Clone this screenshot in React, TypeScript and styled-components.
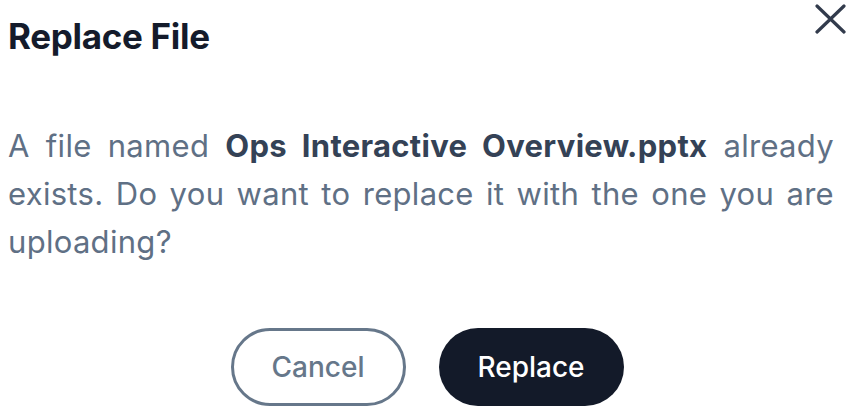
import React from "react";
import styled, { createGlobalStyle } from "styled-components";

const Global = createGlobalStyle`
  html, body { margin: 0; padding: 0; background: #ffffff; }
  body { font-family: Inter, "Noto Sans", sans-serif; -webkit-font-smoothing: antialiased; }
`;

const Dialog = styled.div`
  width: 849px;
  height: 411px;
  box-sizing: border-box;
  padding: 0 3px 0 8px;
  display: flex;
  flex-direction: column;
`;

const Header = styled.div`
  display: flex;
  justify-content: space-between;
  align-items: flex-start;
`;

const Title = styled.h2`
  margin: 15px 0 0;
  font-size: 35px;
  line-height: 42px;
  font-weight: 700;
  color: #141b2b;
  letter-spacing: -0.3px;
`;

const CloseButton = styled.button`
  border: none;
  background: none;
  padding: 0;
  margin: 4px 0 0;
  width: 31px;
  height: 30px;
  display: flex;
  cursor: pointer;
`;

const Body = styled.p`
  margin: 65px 12px 0 0;
  font-size: 31px;
  line-height: 48px;
  color: #5f7085;
  text-align: justify;
  letter-spacing: 0.3px;
`;

const Strong = styled.strong`
  font-weight: 700;
  color: #344256;
`;

const Actions = styled.div`
  margin-top: auto;
  margin-bottom: 5px;
  display: flex;
  justify-content: center;
  gap: 33px;
`;

const Button = styled.button<{ $primary?: boolean }>`
  height: 78px;
  border-radius: 39px;
  box-sizing: border-box;
  font-family: Inter, "Noto Sans", sans-serif;
  font-size: 28px;
  font-weight: 500;
  cursor: pointer;
  padding: 0;
  border: ${(p) => (p.$primary ? "none" : "3px solid #66778a")};
  background: ${(p) => (p.$primary ? "#131a29" : "#ffffff")};
  color: ${(p) => (p.$primary ? "#ffffff" : "#66778a")};
  width: ${(p) => (p.$primary ? "185px" : "175px")};
`;

export default function App() {
  return (
    <>
      <Global />
      <Dialog>
        <Header>
          <Title>Replace File</Title>
          <CloseButton aria-label="Close">
            <svg width="31" height="30" viewBox="0 0 31 30">
              <path
                d="M2 2 L29 28 M29 2 L2 28"
                stroke="#323b4c"
                strokeWidth="3.2"
                strokeLinecap="round"
              />
            </svg>
          </CloseButton>
        </Header>
        <Body>
          A file named <Strong>Ops Interactive Overview.pptx</Strong> already
          exists. Do you want to replace it with the one you are uploading?
        </Body>
        <Actions>
          <Button>Cancel</Button>
          <Button $primary>Replace</Button>
        </Actions>
      </Dialog>
    </>
  );
}
